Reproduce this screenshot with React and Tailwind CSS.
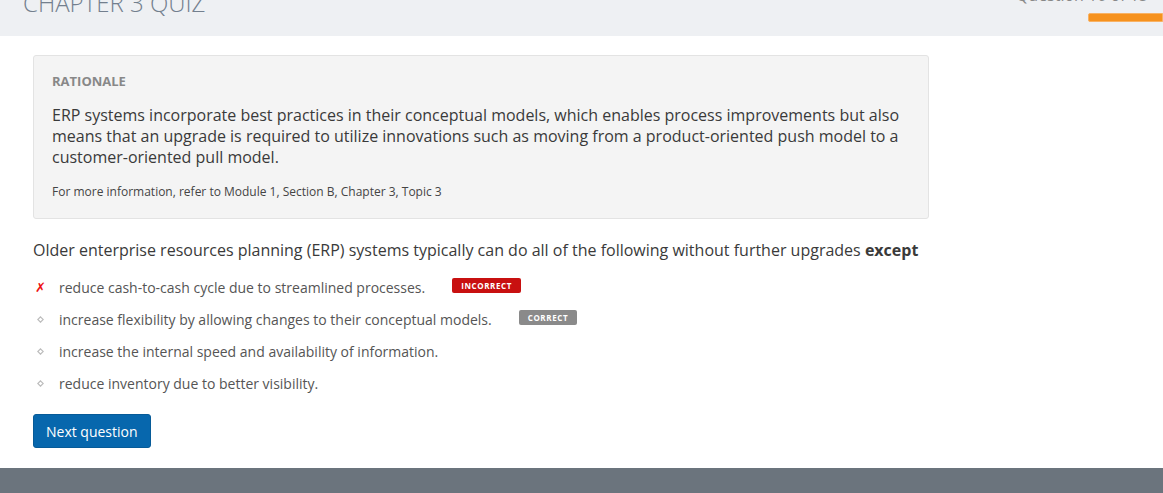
import React from 'react';

const answers = [
  { text: 'reduce cash-to-cash cycle due to streamlined processes.', wrong: true, badge: 'INCORRECT' },
  { text: 'increase flexibility by allowing changes to their conceptual models.', badge: 'CORRECT' },
  { text: 'increase the internal speed and availability of information.' },
  { text: 'reduce inventory due to better visibility.' },
];

function Diamond() {
  return (
    <svg width="7" height="7" viewBox="0 0 7 7" className="block">
      <path d="M3.5 0.8 L6.2 3.5 L3.5 6.2 L0.8 3.5 Z" fill="none" stroke="#bdbdbd" strokeWidth="1.2" />
    </svg>
  );
}

export default function App() {
  return (
    <div className="min-h-[493px] bg-white font-['Open_Sans',sans-serif] text-[#333]">
      {/* header, scrolled so only the lower part shows */}
      <div className="h-[36px] overflow-hidden bg-[#eef0f3] flex justify-between pl-[23px]">
        <h1 className="-mt-[14px] text-[24px] leading-[34px] font-light text-[#737f8e]">CHAPTER 3 QUIZ</h1>
        <div className="flex flex-col items-end">
          <div className="-mt-[17px] mr-[15px] text-[16px] leading-[24px] text-[#888]">Question 10 of 15</div>
          <div className="mt-[6px] w-[75px] h-[9px] bg-[#f6921e] border border-[#f8b264] rounded-l-[2px]" />
        </div>
      </div>

      <div className="px-[33px] pt-[19px]">
        <div className="w-[896px] bg-[#f4f4f4] border border-[#e3e3e3] rounded-[3px] pl-[18px] pr-[18px] pt-[16px] pb-[18px]">
          <div className="text-[13px] leading-[18px] font-bold text-[#888]">RATIONALE</div>
          <p className="mt-[15px] text-[16px] leading-[21px] text-[#3a3a3a]">
            ERP systems incorporate best practices in their conceptual models, which enables process improvements but also
            means that an upgrade is required to utilize innovations such as moving from a product-oriented push model to a
            customer-oriented pull model.
          </p>
          <p className="mt-[15px] text-[12px] leading-[17px] text-[#444]">
            For more information, refer to Module 1, Section B, Chapter 3, Topic 3
          </p>
        </div>

        <p className="mt-[19px] text-[16px] leading-[24px] text-[#3a3a3a]">
          Older enterprise resources planning (ERP) systems typically can do all of the following without further upgrades{' '}
          <span className="font-bold">except</span>
        </p>

        <ul className="mt-[9px]">
          {answers.map((a) => (
            <li key={a.text} className="h-[32px] flex items-center">
              <span className="w-[26px] flex items-center pl-[2px]">
                {a.wrong ? (
                  <span className="text-[13px] leading-none text-[#ee1111] font-['DejaVu_Sans',sans-serif] font-bold italic">✗</span>
                ) : (
                  <span className="pl-[2px]"><Diamond /></span>
                )}
              </span>
              <span className="text-[14px] text-[#555]">{a.text}</span>
              {a.badge && (
                <span
                  className={
                    a.wrong
                      ? 'ml-[27px] -mt-[3px] h-[15px] px-[9px] flex items-center rounded-[2px] bg-[#c81010] text-white text-[8px] font-bold tracking-[0.6px]'
                      : 'ml-[27px] -mt-[3px] h-[15px] px-[9px] flex items-center rounded-[2px] bg-[#8a8a8a] text-white text-[8px] font-bold tracking-[0.6px]'
                  }
                >
                  {a.badge}
                </span>
              )}
            </li>
          ))}
        </ul>

        <button className="mt-[15px] h-[34px] px-[12px] rounded-[3px] bg-[#0767ad] border border-[#075b98] text-white text-[14px]">
          Next question
        </button>
      </div>

      <div className="mt-[20px] h-[60px] bg-[#6b747d]" />
    </div>
  );
}
